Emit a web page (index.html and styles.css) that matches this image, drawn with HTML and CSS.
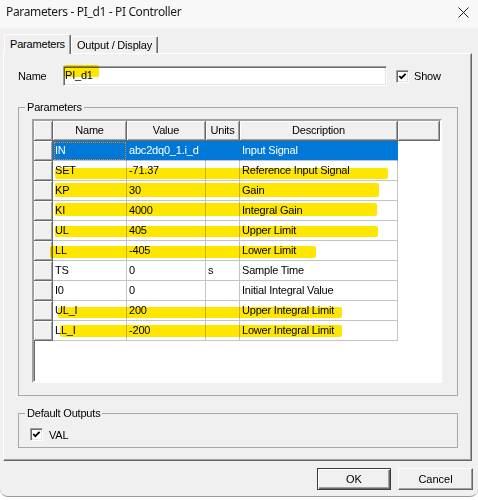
FILE: index.html
```html
<!DOCTYPE html>
<html lang="en">
<head>
    <meta charset="UTF-8">
    <meta name="viewport" content="width=device-width, initial-scale=1.0">
    <title>Parameters - PI_d1 - PI Controller</title>
    <link rel="stylesheet" href="styles.css">
</head>
<body>
    <div class="dialog">
        <div class="titlebar">
            <span class="title">Parameters - PI_d1 - PI Controller</span>
            <svg class="close" width="11" height="11" viewBox="0 0 11 11">
                <path d="M0.5 0.5 L10.5 10.5 M10.5 0.5 L0.5 10.5" stroke="#1a1a1a" stroke-width="1" fill="none"/>
            </svg>
        </div>

        <div class="content">
            <div class="tabs">
                <div class="tab active">Parameters</div>
                <div class="tab">Output / Display</div>
            </div>

            <div class="panel">
                <div class="name-row">
                    <span class="name-label">Name</span>
                    <div class="textbox"><span class="mark mark-name"></span>PI_d1</div>
                    <span class="check">
                        <svg width="9" height="9" viewBox="0 0 9 9"><polyline points="1.3,4 3.3,6.2 7.6,1.8" stroke="#000" stroke-width="1.8" fill="none"/></svg>
                    </span>
                    <span class="check-text">Show</span>
                </div>

                <fieldset class="group group-params">
                    <legend>Parameters</legend>
                    <div class="group-inner">
                        <div class="grid">
                            <div class="row head">
                                <div class="hcell"></div>
                                <div class="hcell">Name</div>
                                <div class="hcell">Value</div>
                                <div class="hcell">Units</div>
                                <div class="hcell">Description</div>
                                <div class="hcell"></div>
                            </div>
                            <div class="row selected">
                                <div class="hcell"></div>
                                <div class="cell focus">IN</div>
                                <div class="cell">abc2dq0_1.i_d</div>
                                <div class="cell"></div>
                                <div class="cell">Input Signal</div>
                                <div class="blank"></div>
                            </div>
                            <div class="row">
                                <div class="hcell"></div>
                                <div class="cell">SET</div>
                                <div class="cell">-71.37</div>
                                <div class="cell"></div>
                                <div class="cell">Reference Input Signal</div>
                                <div class="blank"></div>
                            </div>
                            <div class="row">
                                <div class="hcell"></div>
                                <div class="cell">KP</div>
                                <div class="cell">30</div>
                                <div class="cell"></div>
                                <div class="cell">Gain</div>
                                <div class="blank"></div>
                            </div>
                            <div class="row">
                                <div class="hcell"></div>
                                <div class="cell">KI</div>
                                <div class="cell">4000</div>
                                <div class="cell"></div>
                                <div class="cell">Integral Gain</div>
                                <div class="blank"></div>
                            </div>
                            <div class="row">
                                <div class="hcell"></div>
                                <div class="cell">UL</div>
                                <div class="cell">405</div>
                                <div class="cell"></div>
                                <div class="cell">Upper Limit</div>
                                <div class="blank"></div>
                            </div>
                            <div class="row">
                                <div class="hcell"></div>
                                <div class="cell">LL</div>
                                <div class="cell">-405</div>
                                <div class="cell"></div>
                                <div class="cell">Lower Limit</div>
                                <div class="blank"></div>
                            </div>
                            <div class="row">
                                <div class="hcell"></div>
                                <div class="cell">TS</div>
                                <div class="cell">0</div>
                                <div class="cell">s</div>
                                <div class="cell">Sample Time</div>
                                <div class="blank"></div>
                            </div>
                            <div class="row">
                                <div class="hcell"></div>
                                <div class="cell">I0</div>
                                <div class="cell">0</div>
                                <div class="cell"></div>
                                <div class="cell">Initial Integral Value</div>
                                <div class="blank"></div>
                            </div>
                            <div class="row">
                                <div class="hcell"></div>
                                <div class="cell">UL_I</div>
                                <div class="cell">200</div>
                                <div class="cell"></div>
                                <div class="cell">Upper Integral Limit</div>
                                <div class="blank"></div>
                            </div>
                            <div class="row">
                                <div class="hcell"></div>
                                <div class="cell">LL_I</div>
                                <div class="cell">-200</div>
                                <div class="cell"></div>
                                <div class="cell">Lower Integral Limit</div>
                                <div class="blank"></div>
                            </div>

                            <!-- marker strokes drawn over the screenshot -->
                            <span class="mark mark-set"></span>
                            <span class="mark mark-kp"></span>
                            <span class="mark mark-ki"></span>
                            <span class="mark mark-ul"></span>
                            <span class="mark mark-ll"></span>
                            <span class="mark mark-uli"></span>
                            <span class="mark mark-lli"></span>
                        </div>
                    </div>
                </fieldset>

                <fieldset class="group group-outputs">
                    <legend>Default Outputs</legend>
                    <div class="outputs-inner">
                        <span class="check">
                            <svg width="9" height="9" viewBox="0 0 9 9"><polyline points="1.3,4 3.3,6.2 7.6,1.8" stroke="#000" stroke-width="1.8" fill="none"/></svg>
                        </span>
                        <span class="check-text">VAL</span>
                    </div>
                </fieldset>
            </div>

            <div class="buttons">
                <button class="btn default">OK</button>
                <button class="btn">Cancel</button>
            </div>
        </div>
    </div>
</body>
</html>
```

FILE: styles.css
```css
body {
    margin: 0;
    background: #ffffff;
    font-family: "Liberation Sans", Arial, sans-serif;
    font-size: 11px;
    letter-spacing: -0.2px;
    color: #000;
}
.dialog {
    width: 478px;
    height: 497px;
    box-sizing: border-box;
    background: #f0f0f0;
    border-bottom: 1px solid #9c9c9c;
    border-radius: 0 0 8px 8px;
    overflow: hidden;
}
.titlebar {
    height: 28px;
    box-sizing: border-box;
    padding: 3px 9px 0 6px;
    display: flex;
    align-items: flex-start;
    background: #f8f8f8;
    font-family: "Noto Sans", sans-serif;
    font-size: 12px;
    letter-spacing: -0.35px;
    line-height: 18px;
    color: #1a1a1a;
}
.close {
    margin: 4px 0 0 auto;
}
.content {
    padding: 6px 6px 0 3px;
}

/* tabs */
.tabs {
    display: flex;
    align-items: flex-end;
    height: 19px;
    padding-left: 1px;
}
.tab {
    box-sizing: border-box;
    height: 17px;
    width: 87px;
    text-align: center;
    line-height: 16px;
    border-top: 1px solid #fff;
    border-left: 1px solid #fff;
    border-right: 1px solid #696969;
    box-shadow: inset -1px 0 #a0a0a0;
    border-radius: 2px 2px 0 0;
}
.tab.active {
    position: relative;
    z-index: 1;
    width: 67px;
    height: 20px;
    margin-bottom: -1px;
    line-height: 18px;
    background: #f0f0f0;
}
.panel {
    box-sizing: border-box;
    height: 408px;
    padding: 12px 0 0 14px;
    border-top: 1px solid #fff;
    border-left: 1px solid #fff;
    border-right: 1px solid #696969;
    border-bottom: 1px solid #696969;
    box-shadow: inset -1px -1px #a0a0a0;
}

/* name row */
.name-row {
    display: flex;
    align-items: center;
    height: 20px;
}
.name-label {
    width: 45px;
}
.textbox {
    position: relative;
    width: 324px;
    height: 20px;
    box-sizing: border-box;
    padding-left: 1px;
    line-height: 17px;
    background: #fff;
    border: 1px solid;
    border-color: #a0a0a0 #fff #fff #a0a0a0;
    box-shadow: inset 1px 1px #696969, inset -1px -1px #e3e3e3;
}
.check {
    width: 13px;
    height: 13px;
    box-sizing: border-box;
    display: flex;
    align-items: center;
    justify-content: center;
    margin-left: 9px;
    background: #fff;
    border: 1px solid;
    border-color: #a0a0a0 #fff #fff #a0a0a0;
    box-shadow: inset 1px 1px #696969, inset -1px -1px #e3e3e3;
}
.check-text {
    margin-left: 5px;
}

/* group boxes */
.group {
    width: 440px;
    box-sizing: border-box;
    margin: 15px 0 0 0;
    padding: 0;
    border: 1px solid #a8a8a8;
}
.group legend {
    margin-left: 6px;
    padding: 0 2px;
    line-height: 13px;
}
.group-inner {
    padding: 5px 0 12px 13px;
}
.group-outputs {
    margin-top: 11px;
}
.outputs-inner {
    display: flex;
    align-items: center;
    padding: 8px 0 6px 11px;
}
.outputs-inner .check {
    margin-left: 0;
}
.outputs-inner .check-text {
    margin-left: 6px;
}

/* parameter grid */
.grid {
    position: relative;
    width: 410px;
    height: 264px;
    box-sizing: border-box;
    background: #fff;
    border: 2px solid;
    border-color: #a0a0a0 #fff #fff #a0a0a0;
    box-shadow: inset 1px 1px #696969;
}
.row {
    display: grid;
    grid-template-columns: 19px 74px 79px 34px 158px 42px;
    height: 20px;
}
.hcell,
.cell,
.blank {
    box-sizing: border-box;
    height: 20px;
    white-space: nowrap;
    overflow: hidden;
}
.hcell {
    background: #f0f0f0;
    text-align: center;
    line-height: 19px;
    border-right: 1px solid #696969;
    border-bottom: 1px solid #696969;
    box-shadow: inset 1px 1px #fff, inset -1px -1px #a0a0a0;
}
.cell {
    padding-left: 2px;
    line-height: 19px;
    border-right: 1px solid #c4c4c4;
    border-bottom: 1px solid #c4c4c4;
}
.row.selected .cell {
    background: #0078d7;
    color: #fff;
    border-right-color: #0078d7;
}
.cell.focus {
    outline: 1px dotted #d8892c;
    outline-offset: -2px;
}

/* yellow highlighter */
.mark {
    position: absolute;
    background: #ffe600;
    mix-blend-mode: multiply;
    border-radius: 2px;
}
.mark-name { left: 0; top: -2px; width: 35px; height: 12px; }
.mark-set { left: 21px; top: 47px; width: 333px; height: 11px; }
.mark-kp { left: 21px; top: 62px; width: 324px; height: 14px; }
.mark-ki { left: 21px; top: 82px; width: 322px; height: 13px; }
.mark-ul { left: 21px; top: 105px; width: 323px; height: 11px; }
.mark-ll { left: 16px; top: 125px; width: 266px; height: 12px; }
.mark-uli { left: 24px; top: 186px; width: 284px; height: 11px; }
.mark-lli { left: 26px; top: 204px; width: 282px; height: 12px; }

/* dialog buttons */
.buttons {
    display: flex;
    justify-content: flex-end;
    gap: 7px;
    margin: 7px -1px 0 0;
}
.btn {
    width: 75px;
    height: 22px;
    box-sizing: border-box;
    padding: 0;
    background: #f0f0f0;
    font: inherit;
    color: #000;
    border: 1px solid;
    border-color: #fff #696969 #696969 #fff;
    box-shadow: inset -1px -1px #a0a0a0;
}
.btn.default {
    width: 74px;
    border-color: #3c3c3c;
    box-shadow: inset 1px 1px #fff, inset -1px -1px #696969, inset -2px -2px #a0a0a0;
}
```
